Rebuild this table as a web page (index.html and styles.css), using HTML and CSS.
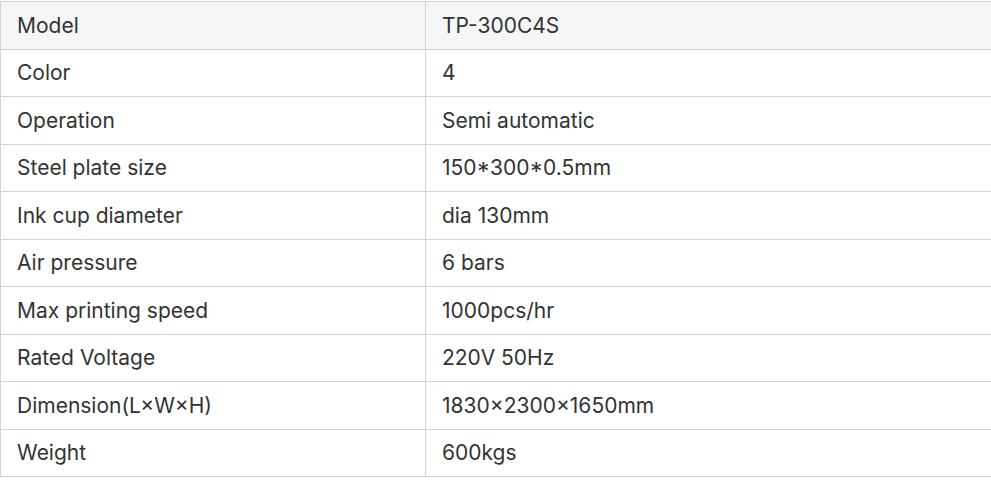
FILE: index.html
```html
<!DOCTYPE html>
<html>
<head>
<meta charset="utf-8">
<link rel="stylesheet" href="styles.css">
</head>
<body>
<div class="wrap">
<table class="spec">
<tbody>
<tr class="head"><td class="k">Model</td><td>TP-300C4S</td></tr>
<tr><td class="k">Color</td><td>4</td></tr>
<tr><td class="k">Operation</td><td>Semi automatic</td></tr>
<tr><td class="k">Steel plate size</td><td>150*300*0.5mm</td></tr>
<tr><td class="k">Ink cup diameter</td><td>dia 130mm</td></tr>
<tr><td class="k">Air pressure</td><td>6 bars</td></tr>
<tr><td class="k">Max printing speed</td><td>1000pcs/hr</td></tr>
<tr><td class="k">Rated Voltage</td><td>220V 50Hz</td></tr>
<tr><td class="k">Dimension(L×W×H)</td><td>1830×2300×1650mm</td></tr>
<tr><td class="k">Weight</td><td>600kgs</td></tr>
</tbody>
</table>
</div>
</body>
</html>
```
FILE: styles.css
```css
html, body { margin: 0; padding: 0; background: #fff; }
.wrap { overflow: hidden; width: 991px; padding-top: 1px; }
.spec {
  border-collapse: collapse;
  width: 1000px;
  font-family: Inter, "Noto Sans", sans-serif;
  font-size: 21px;
  color: #333;
}
.spec td {
  border: 1px solid #d2d2d2;
  height: 47.5px;
  padding: 0 16px;
  box-sizing: border-box;
  vertical-align: middle;
  line-height: 1.2;
}
.spec td.k { width: 425px; }
.spec tr.head td { background: #f5f6f8; }
```
